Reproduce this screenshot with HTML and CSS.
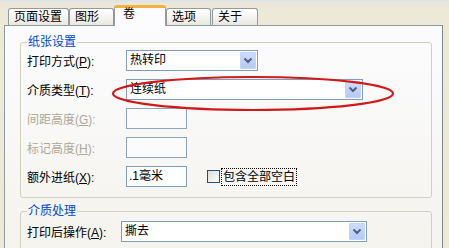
FILE: index.html
```html
<!DOCTYPE html>
<html lang="zh-CN">
<head>
<meta charset="utf-8">
<title>卷</title>
<link rel="stylesheet" href="styles.css">
</head>
<body>
<div class="dialog">
  <div class="tabs">
    <div class="tab t1">页面设置</div>
    <div class="tab t2">图形</div>
    <div class="tab sel">卷</div>
    <div class="tab t4">选项</div>
    <div class="tab t5">关于</div>
  </div>
  <div class="panel">
    <fieldset class="group g1">
      <legend>纸张设置</legend>
      <div class="rows">
        <div class="row">
          <span class="lbl">打印方式(<u>P</u>):</span>
          <div class="combo c1"><span class="val">热转印</span><span class="btn"><svg width="16" height="17" viewBox="0 0 16 17"><path d="M4.5 6.5 L8 10 L11.5 6.5" fill="none" stroke="#4d6185" stroke-width="2"/></svg></span></div>
        </div>
        <div class="row">
          <span class="lbl">介质类型(<u>T</u>):</span>
          <div class="combo c2"><span class="val">连续纸</span><span class="btn"><svg width="16" height="17" viewBox="0 0 16 17"><path d="M4.5 6.5 L8 10 L11.5 6.5" fill="none" stroke="#4d6185" stroke-width="2"/></svg></span></div>
        </div>
        <div class="row">
          <span class="lbl dis">间距高度(<u>G</u>):</span>
          <div class="field off"></div>
        </div>
        <div class="row">
          <span class="lbl dis">标记高度(<u>H</u>):</span>
          <div class="field off"></div>
        </div>
        <div class="row">
          <span class="lbl">额外进纸(<u>X</u>):</span>
          <div class="field">.1毫米</div>
          <span class="check"></span>
          <span class="checklbl">包含全部空白</span>
        </div>
      </div>
    </fieldset>
    <fieldset class="group g2">
      <legend>介质处理</legend>
      <div class="rows">
        <div class="row">
          <span class="lbl lbl2">打印后操作(<u>A</u>):</span>
          <div class="combo c3"><span class="val">撕去</span><span class="btn"><svg width="16" height="17" viewBox="0 0 16 17"><path d="M4.5 6.5 L8 10 L11.5 6.5" fill="none" stroke="#4d6185" stroke-width="2"/></svg></span></div>
        </div>
      </div>
    </fieldset>
  </div>
</div>
<svg class="mark" width="449" height="248" viewBox="0 0 449 248">
  <ellipse cx="253" cy="93.5" rx="140" ry="16.5" fill="none" stroke="#d01a1a" stroke-width="2.2"/>
</svg>
</body>
</html>
```
FILE: styles.css
```css
* { box-sizing: border-box; }
html, body { margin: 0; padding: 0; }
body {
  width: 449px;
  height: 248px;
  overflow: hidden;
  position: relative;
  background: linear-gradient(#dbe2ea 0, #e9e7da 3px, #ece9d8 8px);
  font: 12px "Liberation Sans", "Noto Sans CJK SC", sans-serif;
  color: #000;
}
.tabs {
  display: flex;
  align-items: flex-end;
  height: 25px;
  padding-left: 8px;
}
.tab {
  height: 17px;
  border: 1px solid #919b9c;
  border-bottom: none;
  border-radius: 3px 3px 0 0;
  background: linear-gradient(#ffffff, #f3f2ee 60%, #e8e7e0);
  padding-left: 5px;
  line-height: 16px;
  white-space: nowrap;
}
.t1 { width: 61px; }
.t2 { width: 45px; }
.sel {
  width: 52px;
  height: 21px;
  margin-bottom: -1px;
  position: relative;
  z-index: 1;
  background: #fcfcfe;
  border-top: 3px solid #f3b13f;
  padding-left: 8px;
  line-height: 13px;
}
.t4 { width: 45px; }
.t5 { width: 46px; margin-left: 1px; }
.panel {
  margin-left: 4px;
  width: 439px;
  height: 223px;
  overflow: hidden;
  border: 1px solid #919b9c;
  border-bottom: 0;
  border-right-color: #7e8788;
  background: linear-gradient(#fcfcfe, #f4f3ee);
  padding: 0 10px 0 15px;
}
.group {
  margin: 9px 0 0 0;
  border: 1px solid #d0d0bf;
  border-radius: 3px;
  padding: 1px 0 10px 6px;
  min-width: 0;
}
.group legend {
  padding: 0 1px;
  color: #0046d5;
  line-height: 14px;
}
.g2 { margin-top: 6px; padding-top: 3px; padding-bottom: 10px; }
.rows { display: flex; flex-direction: column; gap: 8px; }
.row { display: flex; align-items: center; height: 21px; }
.lbl { width: 99px; flex: none; white-space: nowrap; }
.lbl2 { width: 94px; }
.dis { color: #aca899; }
u { text-decoration: underline; text-underline-offset: 1px; }
.combo {
  display: flex;
  align-items: stretch;
  height: 21px;
  border: 1px solid #7f9db9;
  background: #fff;
  padding: 1px;
}
.c1 { width: 132px; }
.c2 { width: 237px; }
.c3 { width: 246px; }
.val { flex: 1; padding-left: 2px; line-height: 17px; white-space: nowrap; }
.btn {
  width: 16px;
  height: 17px;
  background: linear-gradient(#cfdcfb, #b6c9f4);
  border: 1px solid #c3d3fd;
  border-radius: 1px;
  display: flex;
}
.btn svg { margin: -1px; }
.field {
  width: 61px;
  height: 21px;
  border: 1px solid #7f9db9;
  background: #fff;
  padding-left: 2px;
  line-height: 19px;
}
.field.off { border-color: #8fa3bb; background: #fbfbfb; }
.check {
  width: 13px;
  height: 13px;
  margin-left: 20px;
  border: 1px solid #1c5180;
  background: linear-gradient(135deg, #dcdcd7, #ffffff);
}
.checklbl {
  margin-left: 1px;
  padding: 0 1px;
  height: 18px;
  line-height: 16px;
  border: 1px dotted #000;
}
.mark {
  position: absolute;
  left: 0;
  top: 0;
  pointer-events: none;
}
```
